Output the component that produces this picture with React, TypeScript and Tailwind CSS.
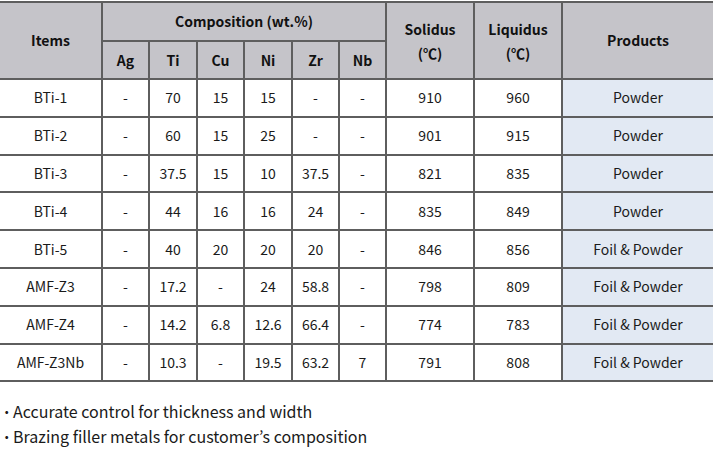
import React from 'react';

type Row = {
  item: string;
  comp: string[];
  solidus: string;
  liquidus: string;
  product: string;
};

const rows: Row[] = [
  { item: 'BTi-1', comp: ['-', '70', '15', '15', '-', '-'], solidus: '910', liquidus: '960', product: 'Powder' },
  { item: 'BTi-2', comp: ['-', '60', '15', '25', '-', '-'], solidus: '901', liquidus: '915', product: 'Powder' },
  { item: 'BTi-3', comp: ['-', '37.5', '15', '10', '37.5', '-'], solidus: '821', liquidus: '835', product: 'Powder' },
  { item: 'BTi-4', comp: ['-', '44', '16', '16', '24', '-'], solidus: '835', liquidus: '849', product: 'Powder' },
  { item: 'BTi-5', comp: ['-', '40', '20', '20', '20', '-'], solidus: '846', liquidus: '856', product: 'Foil & Powder' },
  { item: 'AMF-Z3', comp: ['-', '17.2', '-', '24', '58.8', '-'], solidus: '798', liquidus: '809', product: 'Foil & Powder' },
  { item: 'AMF-Z4', comp: ['-', '14.2', '6.8', '12.6', '66.4', '-'], solidus: '774', liquidus: '783', product: 'Foil & Powder' },
  { item: 'AMF-Z3Nb', comp: ['-', '10.3', '-', '19.5', '63.2', '7'], solidus: '791', liquidus: '808', product: 'Foil & Powder' },
];

const elements = ['Ag', 'Ti', 'Cu', 'Ni', 'Zr', 'Nb'];

const font = { fontFamily: '"Noto Sans CJK KR", "Noto Sans", sans-serif' };

export default function App() {
  return (
    <div className="w-[713px] h-[453px] bg-white text-[#1a1a1a] pt-[1px]" style={font}>
      <table className="w-[713px] table-fixed border-collapse text-[14px]">
        <colgroup>
          <col className="w-[102px]" />
          <col className="w-[47px]" />
          <col className="w-[48px]" />
          <col className="w-[47px]" />
          <col className="w-[48px]" />
          <col className="w-[47px]" />
          <col className="w-[47px]" />
          <col className="w-[88px]" />
          <col className="w-[88px]" />
          <col className="w-[151px]" />
        </colgroup>
        <thead className="text-[#111]">
          <tr className="h-[39px] bg-[#c5c4c9]">
            <th rowSpan={2} className="border-y-2 border-r-2 border-[#5e5e5e] font-bold">Items</th>
            <th colSpan={6} className="border-2 border-[#5e5e5e] font-bold">Composition (wt.%)</th>
            <th rowSpan={2} className="border-2 border-[#5e5e5e] font-bold leading-[24px]">
              Solidus
              <br />
              (℃)
            </th>
            <th rowSpan={2} className="border-2 border-[#5e5e5e] font-bold leading-[24px]">
              Liquidus
              <br />
              (℃)
            </th>
            <th rowSpan={2} className="border-y-2 border-l-2 border-[#5e5e5e] font-bold">Products</th>
          </tr>
          <tr className="h-[38px] bg-[#c5c4c9]">
            {elements.map((el) => (
              <th key={el} className="border-2 border-[#5e5e5e] font-bold">
                {el}
              </th>
            ))}
          </tr>
        </thead>
        <tbody>
          {rows.map((r) => (
            <tr key={r.item} className="h-[37.8px] text-center">
              <td className="border-y-2 border-r-2 border-[#5e5e5e]">{r.item}</td>
              {r.comp.map((c, i) => (
                <td key={i} className="border-2 border-[#5e5e5e]">
                  {c}
                </td>
              ))}
              <td className="border-2 border-[#5e5e5e]">{r.solidus}</td>
              <td className="border-2 border-[#5e5e5e]">{r.liquidus}</td>
              <td className="border-y-2 border-l-2 border-[#5e5e5e] bg-[#e2e9f3]">{r.product}</td>
            </tr>
          ))}
        </tbody>
      </table>

      {/* Notes */}
      <ul className="mt-[17px] text-[16px] leading-[25px]">
        <li className="flex items-center">
          <span className="w-[13px] shrink-0 pl-[2px] font-bold">·</span>
          <span>Accurate control for thickness and width</span>
        </li>
        <li className="flex items-center">
          <span className="w-[13px] shrink-0 pl-[2px] font-bold">·</span>
          <span>Brazing filler metals for customer’s composition</span>
        </li>
      </ul>
    </div>
  );
}
